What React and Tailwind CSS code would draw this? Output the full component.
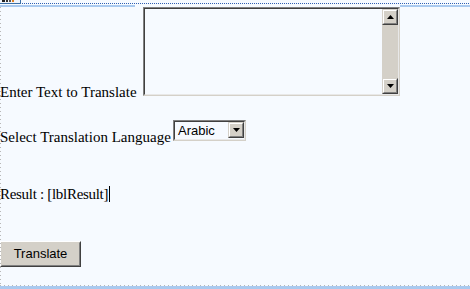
import React from "react";

function Arrow({ down }) {
  return (
    <svg width="7" height="4" viewBox="0 0 7 4" className="block">
      {down ? (
        <path d="M0 0H7L3.5 4Z" fill="#000" />
      ) : (
        <path d="M0 4H7L3.5 0Z" fill="#000" />
      )}
    </svg>
  );
}

function ScrollBtn({ down }) {
  return (
    <div className="w-[16px] h-[16px] border border-t-[#d4d0c8] border-l-[#d4d0c8] border-b-[#404040] border-r-[#404040]">
      <div className="w-full h-full flex items-center justify-center bg-[#d4d0c8] border border-t-white border-l-white border-b-[#808080] border-r-[#808080]">
        <Arrow down={down} />
      </div>
    </div>
  );
}

export default function App() {
  const serif = { fontFamily: '"Liberation Serif", "Times New Roman", serif' };
  return (
    <div
      className="relative w-[470px] h-[289px] bg-[#f6faff] text-black text-[15px] flex flex-col overflow-hidden"
      style={serif}
    >
      {/* left dotted edge */}
      <div className="absolute left-0 top-[7px] bottom-[4px] w-px bg-[repeating-linear-gradient(180deg,#b8b8b8_0_1px,transparent_1px_4px)]" />
      {/* design-time tab */}
      <div className="absolute left-0 top-0 w-[21px] h-[4px] border-b border-r border-[#3a6ea5] bg-[#eef3fb] flex items-start gap-[1px] pl-[2px]">
        <div className="w-[3px] h-[2px] bg-[#222]" />
        <div className="w-[2px] h-[2px] bg-[#333]" />
        <div className="w-[2px] h-[2px] bg-[#555]" />
        <div className="w-[2px] h-[2px] bg-[#e08020]" />
      </div>

      {/* header lines */}
      <div className="h-[3px] shrink-0" />
      <div className="h-px shrink-0 bg-[repeating-linear-gradient(90deg,#2f5fb3_0_1px,transparent_1px_2px)]" />
      <div className="h-px shrink-0" />
      <div className="h-[2px] shrink-0 flex">
        <div className="w-[135px] bg-[#a9c9ef]" />
        <div className="flex-1" />
        <div className="w-[70px] bg-[#a9c9ef]" />
      </div>

      {/* row 1 */}
      <div className="h-[94px] shrink-0 flex items-end">
        <span className="w-[143px] shrink-0 leading-[18px] whitespace-nowrap">Enter Text to Translate</span>
        <div className="w-[257px] h-[89px] mb-[5px] shrink-0 border border-t-[#808080] border-l-[#808080] border-b-[#d4d0c8] border-r-[#d4d0c8]">
          <div className="w-full h-full flex border border-t-[#404040] border-l-[#404040] border-b-[#e8e8e8] border-r-[#e8e8e8]">
            <div className="flex-1 bg-[#f6faff]" />
            <div className="w-[16px] bg-[#d4d0c8] flex flex-col justify-between">
              <ScrollBtn />
              <ScrollBtn down />
            </div>
          </div>
        </div>
      </div>

      {/* row 2 */}
      <div className="mt-[19px] h-[26px] shrink-0 flex items-end">
        <span className="w-[173px] shrink-0 leading-[18px] whitespace-nowrap">Select Translation Language</span>
        <div className="w-[73px] h-[21px] mb-[5px] shrink-0 border border-t-[#808080] border-l-[#808080] border-b-[#d4d0c8] border-r-[#d4d0c8]">
          <div className="w-full h-full flex items-stretch border border-t-[#404040] border-l-[#404040] border-b-[#e8e8e8] border-r-[#e8e8e8] bg-[#f6faff]">
            <span
              className="flex-1 pl-[3px] text-[13px] leading-[17px] text-black"
              style={{ fontFamily: '"Liberation Sans", Arial, sans-serif' }}
            >
              Arabic
            </span>
            <ScrollBtn down />
          </div>
        </div>
      </div>

      {/* row 3 */}
      <div className="mt-[39px] h-[18px] shrink-0 flex items-center leading-[18px]">
        <span className="whitespace-nowrap tracking-[-0.3px]">Result : [lblResult]</span>
        <span className="ml-px w-px h-[16px] bg-black" />
      </div>

      {/* row 4 */}
      <div className="mt-[38px] shrink-0 flex">
        <button
          className="w-[81px] h-[26px] border border-t-white border-l-white border-b-[#404040] border-r-[#404040] bg-[#d4d0c8] p-0"
        >
          <div
            className="w-full h-full flex items-center justify-center border border-t-[#d4d0c8] border-l-[#d4d0c8] border-b-[#808080] border-r-[#808080] text-[13px] text-black"
            style={{ fontFamily: '"Liberation Sans", Arial, sans-serif' }}
          >
            Translate
          </div>
        </button>
      </div>

      {/* bottom lines */}
      <div className="mt-auto h-px shrink-0 bg-[repeating-linear-gradient(90deg,#b8b8b8_0_1px,transparent_1px_4px)]" />
      <div className="h-[3px] shrink-0 bg-[#a9c9ef]" />
    </div>
  );
}
